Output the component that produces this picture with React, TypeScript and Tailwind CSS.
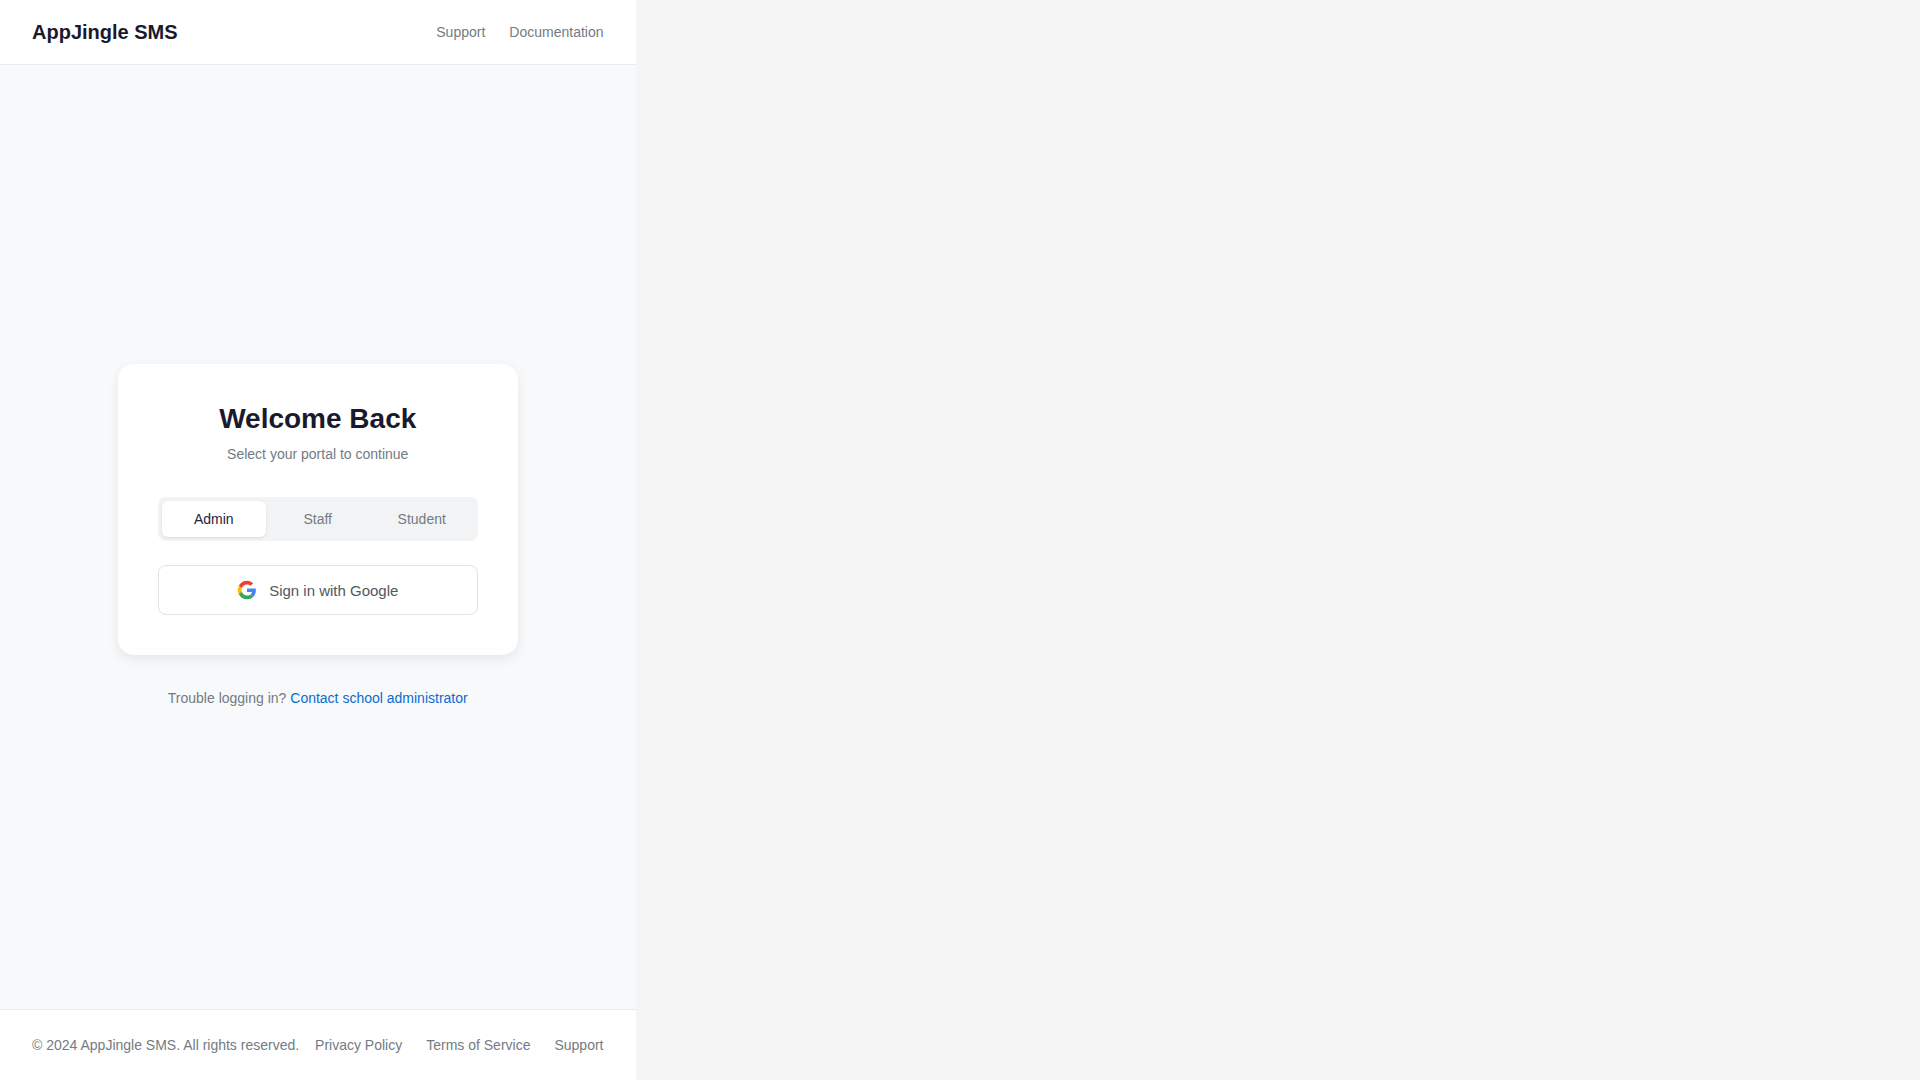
import React from 'react';

const GoogleIcon = () => (
  <svg width="20" height="20" viewBox="-2 -2 52 52">
    <path fill="#EA4335" d="M24 9.5c3.54 0 6.71 1.22 9.21 3.6l6.85-6.85C35.9 2.38 30.47 0 24 0 14.62 0 6.51 5.38 2.56 13.22l7.98 6.19C12.43 13.72 17.74 9.5 24 9.5z" />
    <path fill="#4285F4" d="M46.98 24.55c0-1.57-.15-3.09-.38-4.55H24v9.02h12.94c-.58 2.96-2.26 5.48-4.78 7.18l7.73 6c4.51-4.18 7.09-10.36 7.09-17.65z" />
    <path fill="#FBBC05" d="M10.53 28.59c-.48-1.45-.76-2.99-.76-4.59s.27-3.14.76-4.59l-7.98-6.19C.92 16.46 0 20.12 0 24c0 3.88.92 7.54 2.56 10.78l7.97-6.19z" />
    <path fill="#34A853" d="M24 48c6.48 0 11.93-2.13 15.89-5.81l-7.73-6c-2.15 1.45-4.92 2.3-8.16 2.3-6.26 0-11.57-4.22-13.47-9.91l-7.98 6.19C6.51 42.62 14.62 48 24 48z" />
  </svg>
);

const App: React.FC = () => {
  return (
    <div className="min-h-screen bg-[#f5f5f5] font-['Liberation_Sans',Arial,sans-serif]">
      <div className="flex h-screen w-[635.5px] flex-col bg-[#f8f9fa]">
        <header className="flex h-[65px] items-center justify-between border-b border-[#e9ecef] bg-white px-8">
          <div className="text-xl font-bold text-[#1a1a2e]">AppJingle SMS</div>
          <nav className="flex gap-6 text-sm text-[#737b84]">
            <a>Support</a>
            <a>Documentation</a>
          </nav>
        </header>

        <main className="flex flex-1 flex-col items-center justify-center">
          <div className="w-[400px] rounded-2xl bg-white p-10 text-center shadow-[0_4px_12px_rgba(0,0,0,0.08)]">
            <h1 className="mb-2.5 text-[28px] leading-[30px] font-bold text-[#1a1a2e]">Welcome Back</h1>
            <p className="mb-8 text-sm leading-[21px] text-[#737b84]">Select your portal to continue</p>
            <div className="mb-6 flex rounded-lg bg-[#f1f3f5] p-1">
              <div className="flex-1 rounded-md bg-white py-2 text-sm leading-5 text-[#24243a] shadow-[0_1px_3px_rgba(0,0,0,0.1)]">Admin</div>
              <div className="flex-1 py-2 text-sm leading-5 text-[#737b84]">Staff</div>
              <div className="flex-1 py-2 text-sm leading-5 text-[#737b84]">Student</div>
            </div>
            <button className="flex h-[50px] w-full items-center justify-center gap-3 rounded-lg border border-[#dee2e6] bg-white text-[15px] text-[#52585f]">
              <GoogleIcon />
              <span className="pt-0.5">Sign in with Google</span>
            </button>
          </div>
          <p className="mt-8 text-sm leading-[23px] text-[#737b84]">
            Trouble logging in? <a className="text-[#0a6cd0]">Contact school administrator</a>
          </p>
        </main>

        <footer className="flex h-[71px] items-center justify-between border-t border-[#e9ecef] bg-white px-8 text-sm text-[#737b84]">
          <span>© 2024 AppJingle SMS. All rights reserved.</span>
          <div className="flex gap-6">
            <a>Privacy Policy</a>
            <a>Terms of Service</a>
            <a>Support</a>
          </div>
        </footer>
      </div>
    </div>
  );
};

export default App;
